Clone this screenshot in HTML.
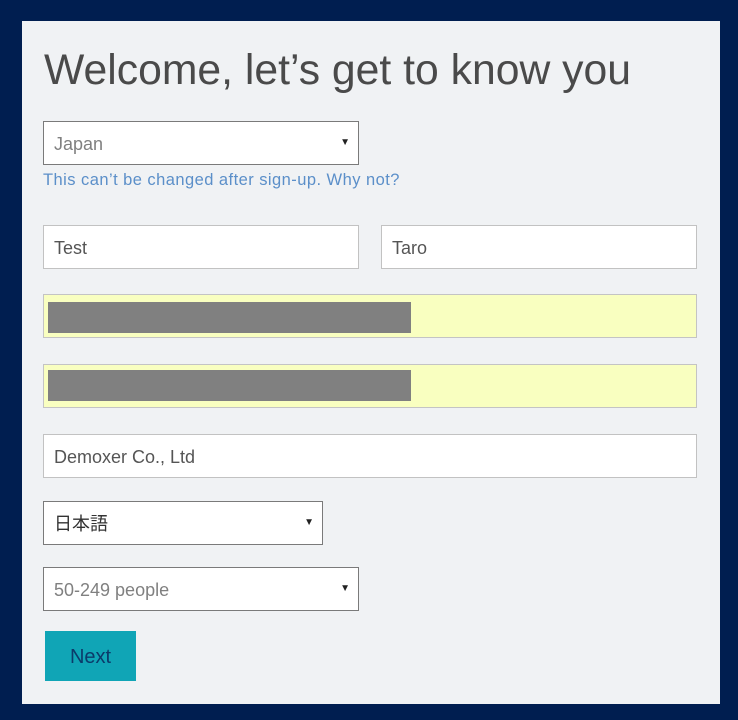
<!DOCTYPE html>
<html><head><meta charset="utf-8"><style>
body{margin:0;width:738px;height:720px;background:#001e50;position:relative;overflow:hidden;font-family:"Liberation Sans","Noto Sans CJK JP",sans-serif}
.panel{position:absolute;left:22px;top:21px;width:698px;height:683px;background:#f0f2f4}
.f{position:absolute;box-sizing:border-box;background:#fff;border:1px solid #c2c2c2;font-size:18px;color:#555;padding-left:10px;line-height:44px}
.s{border-color:#7a7a7a;color:#808080}
.arr{position:absolute;right:8px;top:-1px;font-size:10px;color:#222}
.y{background:#f9ffc0;border-color:#c4c4c4}
.g{position:absolute;left:4px;top:7px;width:363px;height:31px;background:#808080}
</style></head><body>
<div class="panel"></div>
<svg style="position:absolute;left:0;top:0" width="738" height="120"><text x="44" y="84" font-family="Liberation Sans, sans-serif" font-size="43" fill="#4a4a4a" textLength="587" lengthAdjust="spacingAndGlyphs">Welcome, let’s get to know you</text></svg>
<div class="f s" style="left:43px;top:121px;width:316px;height:44px">Japan<span class="arr">▼</span></div>
<div style="position:absolute;left:43px;top:171px;font-size:16.5px;letter-spacing:0.45px;color:#5b8fc9">This can’t be changed after sign-up. Why not?</div>
<div class="f" style="left:43px;top:225px;width:316px;height:44px">Test</div>
<div class="f" style="left:381px;top:225px;width:316px;height:44px">Taro</div>
<div class="f y" style="left:43px;top:294px;width:654px;height:44px"><div class="g"></div></div>
<div class="f y" style="left:43px;top:364px;width:654px;height:44px"><div class="g" style="top:5px"></div></div>
<div class="f" style="left:43px;top:434px;width:654px;height:44px">Demoxer Co., Ltd</div>
<div class="f s" style="left:43px;top:501px;width:280px;height:44px;color:#333">日本語<span class="arr">▼</span></div>
<div class="f s" style="left:43px;top:567px;width:316px;height:44px">50-249 people<span class="arr">▼</span></div>
<div style="position:absolute;left:45px;top:631px;width:91px;height:50px;background:#10a5b6;color:#0b3a6a;font-size:20px;line-height:52px;text-align:center">Next</div>
</body></html>
